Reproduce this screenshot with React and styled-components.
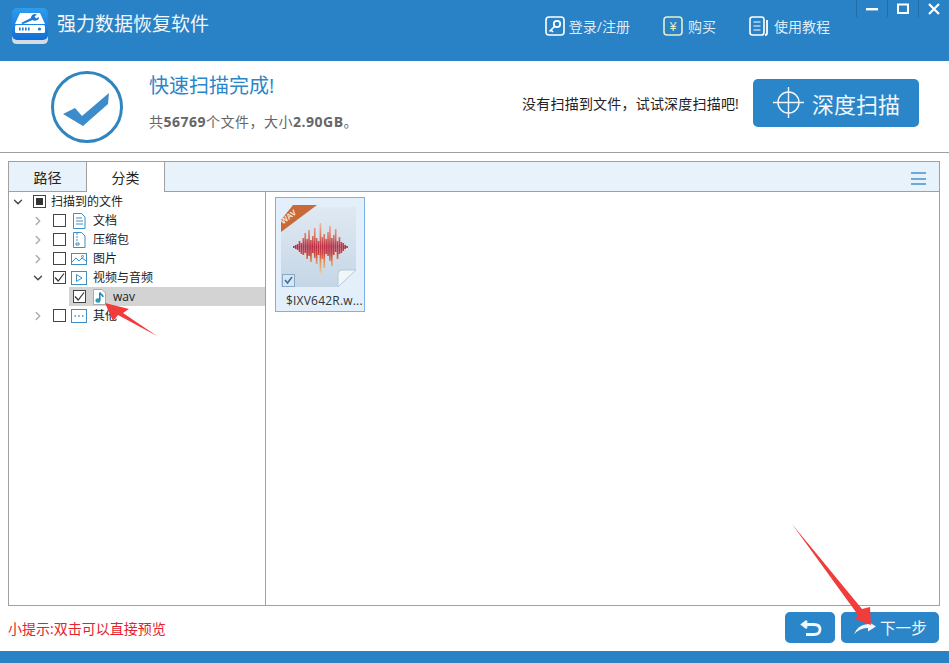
import styled, { createGlobalStyle } from "styled-components";
import { ChevronDown, ChevronRight } from "lucide-react";

const GlobalStyle = createGlobalStyle`
  html, body {
    margin: 0;
    padding: 0;
    background: #fff;
  }
  * {
    box-sizing: border-box;
  }
`;

const FONT = `"Open Sans", "Noto Sans CJK SC", sans-serif`;
const BLUE = "#2981c6";

const Page = styled.div`
  position: relative;
  width: 949px;
  height: 663px;
  overflow: hidden;
  display: flex;
  flex-direction: column;
  background: #fff;
  font-family: ${FONT};
`;

const Header = styled.header`
  flex: none;
  height: 61px;
  display: flex;
  align-items: flex-start;
  background: ${BLUE};
  color: #fff;
`;

const Logo = styled.svg`
  flex: none;
  width: 36px;
  height: 37px;
  margin: 8px 0 0 12px;
`;

const AppTitle = styled.div`
  margin: 10px 0 0 9px;
  font-size: 19px;
  line-height: 28px;
  color: #f2f7fb;
`;

const Nav = styled.nav`
  margin: 16px 0 0 auto;
  display: flex;
  gap: 33px;
`;

const NavItem = styled.div`
  display: flex;
  align-items: center;
  gap: ${(p) => p.$gap ?? 5}px;
  height: 20px;
  font-size: 14px;
  color: #dfecf6;
  white-space: nowrap;
`;

const WindowControls = styled.div`
  flex: none;
  display: flex;
  margin-left: 26px;
  height: 17px;
`;

const WindowButton = styled.div`
  width: 31px;
  height: 17px;
  display: flex;
  align-items: center;
  justify-content: center;
  border-left: 1px solid #1f6ca8;
`;

const Summary = styled.section`
  flex: none;
  height: 92px;
  display: flex;
  align-items: center;
  padding: 0 30px 0 50px;
  border-bottom: 1px solid #a0a0a0;
`;

const SummaryText = styled.div`
  margin: 0 0 10px 25px;
  display: flex;
  flex-direction: column;
`;

const SummaryTitle = styled.div`
  font-size: 20px;
  line-height: 28px;
  color: #2a86c8;
`;

const SummaryCount = styled.div`
  margin-top: 12px;
  font-size: 14px;
  line-height: 20px;
  letter-spacing: 0.5px;
  color: #666;
  b {
    font-weight: 700;
  }
`;

const DeepHint = styled.div`
  margin: 0 0 8px auto;
  font-size: 14px;
  letter-spacing: 0.2px;
  color: #222;
  white-space: nowrap;
`;

const DeepButton = styled.div`
  margin: 0 0 8px 14px;
  width: 166px;
  height: 48px;
  border-radius: 5px;
  background: #2a86c8;
  color: #f0f6fb;
  display: flex;
  align-items: center;
  padding-left: 20px;
  gap: 8px;
  font-size: 22px;
`;

const Panel = styled.main`
  flex: none;
  margin: 8px 0 0 8px;
  width: 932px;
  height: 445px;
  border: 1px solid #a0a0a0;
  display: flex;
  flex-direction: column;
`;

const TabBar = styled.div`
  flex: none;
  height: 30px;
  display: flex;
  background: #e8f2fb;
  border-bottom: 1px solid #a0a0a0;
`;

const Tab = styled.div`
  width: 78px;
  height: ${(p) => (p.$active ? "30px" : "29px")};
  display: flex;
  align-items: center;
  justify-content: center;
  font-size: 14px;
  color: #222;
  border-right: 1px solid #a0a0a0;
  background: ${(p) => (p.$active ? "#fff" : "transparent")};
`;

const MenuIcon = styled.div`
  margin: 10px 13px 0 auto;
  width: 15px;
  height: 13px;
  display: flex;
  flex-direction: column;
  justify-content: space-between;
  span {
    display: block;
    height: 2px;
    background: #6fa9d8;
  }
`;

const Split = styled.div`
  flex: 1;
  display: flex;
  min-height: 0;
`;

const Tree = styled.div`
  flex: none;
  width: 257px;
  border-right: 1px solid #a0a0a0;
`;

const Row = styled.div`
  height: 19px;
  display: flex;
  align-items: center;
  padding-left: ${(p) => p.$indent}px;
  font-size: 12px;
  color: #222;
  white-space: nowrap;
  background: ${(p) => (p.$selected ? "#d3d3d3" : "transparent")};
  margin-left: ${(p) => (p.$selected ? "60px" : "0")};
`;

const Arrow = styled.span`
  width: 14px;
  height: 14px;
  margin-right: 8px;
  display: flex;
  align-items: center;
  justify-content: center;
  color: ${(p) => (p.$open ? "#444" : "#aaa")};
`;

const Box = styled.span`
  flex: none;
  width: 13px;
  height: 13px;
  border: 1px solid #444;
  background: #fff;
  display: flex;
  align-items: center;
  justify-content: center;
`;

const Square = styled.span`
  width: 7px;
  height: 7px;
  background: #333;
`;

const RowIcon = styled.svg`
  flex: none;
  width: 16px;
  height: 16px;
  margin-left: ${(p) => p.$left ?? 5}px;
  margin-right: ${(p) => p.$right ?? 6}px;
`;

const Label = styled.span`
  margin-bottom: 1px;
  margin-left: ${(p) => p.$left ?? 0}px;
`;

const Files = styled.div`
  flex: 1;
  padding: 5px 9px;
`;

const FileTile = styled.div`
  width: 90px;
  height: 115px;
  background: #e3f0fc;
  border: 1px solid #7db2e6;
  display: flex;
  flex-direction: column;
  align-items: flex-start;
`;

const FileThumb = styled.svg`
  flex: none;
  width: 88px;
  height: 90px;
  margin-top: 2px;
`;

const FileName = styled.div`
  margin: 3px 0 0 10px;
  font-size: 12px;
  line-height: 16px;
  letter-spacing: 0.2px;
  color: #333;
  white-space: nowrap;
`;

const BottomBar = styled.div`
  flex: none;
  height: 45px;
  display: flex;
  padding: 6px 10px 0 8px;
`;

const Tip = styled.div`
  margin-top: 7px;
  font-size: 14px;
  line-height: 19px;
  color: #e5222c;
  white-space: nowrap;
`;

const ActionButton = styled.div`
  height: 31px;
  width: ${(p) => p.$width}px;
  margin-left: ${(p) => p.$gap};
  padding-left: ${(p) => p.$pad}px;
  border-radius: 5px;
  background: #2a86c8;
  color: #eef5fb;
  display: flex;
  align-items: center;
  gap: 4px;
  font-size: 15.6px;
`;

const Footer = styled.footer`
  flex: none;
  height: 12px;
  background: ${BLUE};
`;

const Annotations = styled.svg`
  position: absolute;
  left: 0;
  top: 0;
  width: 949px;
  height: 663px;
  pointer-events: none;
`;

const Tick = () => (
  <svg width="11" height="11" viewBox="0 0 11 11">
    <path d="M1 5.5 L4.2 9 L10 1.5" fill="none" stroke="#333" strokeWidth="1.2" />
  </svg>
);

const DocIcon = () => (
  <RowIcon viewBox="0 0 16 16" fill="none" stroke="#3d8fc4" strokeWidth="1">
    <path d="M2.5 .5H10.5L14 4V15.5H2.5Z" />
    <path d="M5 5H11M5 8H12M5 11H12" />
  </RowIcon>
);

const ZipIcon = () => (
  <RowIcon viewBox="0 0 16 16" fill="none" stroke="#3d8fc4" strokeWidth="1">
    <path d="M2.5 .5H10.5L14 4V15.5H2.5Z" />
    <path d="M5 2H7M5 5H7M5 8H7M5 11H8V13H5Z" />
  </RowIcon>
);

const PicIcon = () => (
  <RowIcon viewBox="0 0 16 16" fill="none" stroke="#3d8fc4" strokeWidth="1">
    <rect x=".5" y="2.5" width="15" height="11" />
    <path d="M1 11L5 7L8 10L11 7L15 10" />
    <circle cx="11.5" cy="5.5" r="1" />
  </RowIcon>
);

const VideoIcon = () => (
  <RowIcon viewBox="0 0 16 16" fill="none" stroke="#3d8fc4" strokeWidth="1">
    <rect x=".5" y="1.5" width="15" height="13" />
    <path d="M5.5 4.5L11 8L5.5 11.5Z" />
  </RowIcon>
);

const MoreIcon = () => (
  <RowIcon viewBox="0 0 16 16" fill="none" stroke="#3d8fc4" strokeWidth="1">
    <rect x=".5" y="1.5" width="15" height="13" />
    <path d="M3.5 8H5M7.2 8H8.7M11 8H12.5" strokeWidth="1.6" />
  </RowIcon>
);

const MusicIcon = () => (
  <RowIcon $left={7} $right={4} viewBox="0 0 16 16">
    <path d="M.5 .5H9L12.5 4V15.5H.5Z" fill="#fff" stroke="#aaa" />
    <ellipse cx="5" cy="11.5" rx="2.6" ry="2.2" fill="#1f9fc4" />
    <path d="M6.8 11V3.5C7.3 5.5 10 5.5 10 8" fill="none" stroke="#1f7fb0" strokeWidth="1.5" />
  </RowIcon>
);

const TREE = [
  { label: "文档", icon: DocIcon },
  { label: "压缩包", icon: ZipIcon },
  { label: "图片", icon: PicIcon },
  { label: "视频与音频", icon: VideoIcon, open: true, checked: true },
];

// [up, down] lengths of the wave bars in the thumbnail, left to right
const WAVE = [
  [1, 1], [2, 2], [3, 3], [6, 5], [4, 7], [9, 8], [14, 6], [8, 12], [17, 9], [7, 15],
  [11, 6], [19, 11], [9, 17], [6, 8], [24, 26], [10, 12], [13, 21], [8, 7], [15, 9],
  [21, 14], [9, 19], [12, 8], [18, 5], [6, 12], [10, 7], [5, 6], [4, 4], [2, 2], [1, 1],
];

function WavThumb() {
  return (
    <FileThumb viewBox="0 0 88 90">
      <defs>
        <linearGradient id="page" x1="0" y1="0" x2="0" y2="1">
          <stop offset="0" stopColor="#e0e9f2" />
          <stop offset="1" stopColor="#c5d6e6" />
        </linearGradient>
        <linearGradient id="wave" gradientUnits="userSpaceOnUse" x1="0" y1="22" x2="0" y2="73">
          <stop offset="0" stopColor="#edc2a8" />
          <stop offset="0.3" stopColor="#d8705c" />
          <stop offset="0.48" stopColor="#b92c48" />
          <stop offset="0.62" stopColor="#c9443f" />
          <stop offset="0.8" stopColor="#e29a5c" />
          <stop offset="1" stopColor="#f0c48c" />
        </linearGradient>
      </defs>
      <path d="M17 7H80V70L62 87H5V20Z" fill="url(#page)" />
      <path d="M62 87V74Q62 70 66 70H80Z" fill="#f2f6fa" stroke="#b9c9d8" />
      {WAVE.map(([up, down], i) => (
        <rect key={i} x={17 + i * 1.9} y={47 - up} width="1.7" height={up + down} fill="url(#wave)" />
      ))}
      <path d="M17 5H41L5 32V20Z" fill="#c8693a" />
      <text
        x="14"
        y="19"
        fill="#f6e6d8"
        fontSize="8"
        fontWeight="700"
        fontFamily="Liberation Sans, sans-serif"
        transform="rotate(-38 14 19)"
        textAnchor="middle"
      >
        WAV
      </text>
      <rect x="6.5" y="74.5" width="12" height="12" fill="#d6e6f5" stroke="#8aa6c0" />
      <path d="M9 80L11.5 83L16 77" fill="none" stroke="#3a6f9e" strokeWidth="1.6" />
    </FileThumb>
  );
}

export default function App() {
  return (
    <Page>
      <GlobalStyle />
      <Header>
        <Logo viewBox="0 0 36 37">
          <defs>
            <linearGradient id="logoBlue" x1="0" y1="0" x2="0" y2="1">
              <stop offset="0" stopColor="#2f9cec" />
              <stop offset="1" stopColor="#0f6ed8" />
            </linearGradient>
          </defs>
          <path d="M0 28H36V31Q36 36 31 36H5Q0 36 0 31Z" fill="#d5dde2" />
          <rect x="0" y="0" width="36" height="32" rx="5" fill="url(#logoBlue)" />
          <path d="M8 5H28L33 16H3Z" fill="#fff" />
          <rect x="3" y="17" width="30" height="8" rx="1.5" fill="#fff" />
          <path d="M7 19.5H8.6V22.5H7ZM10 19.5H11.6V22.5H10ZM13 19.5H14.6V22.5H13ZM16 19.5H17.6V22.5H16Z" fill="#1a78d8" />
          <circle cx="27.5" cy="21" r="1.6" fill="#1a78d8" />
          <path d="M9 15L19 10Q19 7 22 6L25 6.5L22.5 8.5L24 10.5L27 9Q27 12 24 12.5Q22 13 20.5 12L11 16Z" fill="#1a78d8" />
        </Logo>
        <AppTitle>强力数据恢复软件</AppTitle>
        <Nav>
          <NavItem $gap={4}>
            <svg width="20" height="20" viewBox="0 0 20 20">
              <rect x="1" y="1" width="18" height="18" rx="3" fill="none" stroke="#fff" strokeWidth="1.6" />
              <circle cx="12" cy="8" r="3.2" fill="none" stroke="#fff" strokeWidth="1.8" />
              <path d="M10 10L4.5 15.5M6 14L8 16" fill="none" stroke="#fff" strokeWidth="1.6" />
            </svg>
            登录/注册
          </NavItem>
          <NavItem>
            <svg width="20" height="20" viewBox="0 0 20 20">
              <rect x="1" y="1" width="18" height="18" rx="3" fill="none" stroke="#e6efc8" strokeWidth="1.6" />
              <text x="10" y="14.5" fontSize="12" textAnchor="middle" fill="#e6efc8" fontFamily="Liberation Sans, sans-serif">
                ¥
              </text>
            </svg>
            购买
          </NavItem>
          <NavItem>
            <svg width="20" height="20" viewBox="0 0 20 20" fill="none" stroke="#fff">
              <rect x="1" y="1" width="14" height="18" rx="2.5" strokeWidth="1.6" />
              <path d="M4.5 6H11.5M4.5 10H11.5M4.5 14H11.5" strokeWidth="1.2" />
              <path d="M18 4V17Q18 19 16 19" strokeWidth="1.8" />
            </svg>
            使用教程
          </NavItem>
        </Nav>
        <WindowControls>
          <WindowButton>
            <svg width="12" height="12" viewBox="0 0 12 12">
              <rect x="0" y="5" width="12" height="2.4" fill="#fff" />
            </svg>
          </WindowButton>
          <WindowButton>
            <svg width="12" height="12" viewBox="0 0 12 12">
              <rect x="1" y="1.5" width="10" height="8.5" fill="none" stroke="#fff" strokeWidth="2" />
            </svg>
          </WindowButton>
          <WindowButton>
            <svg width="12" height="12" viewBox="0 0 12 12">
              <path d="M1 1L11 11M11 1L1 11" stroke="#fff" strokeWidth="2.2" />
            </svg>
          </WindowButton>
        </WindowControls>
      </Header>

      <Summary>
        <svg width="74" height="74" viewBox="0 0 74 74">
          <circle cx="37" cy="37" r="34.5" fill="none" stroke="#3085bf" strokeWidth="3" />
          <path d="M13 44L25 38L32 46L59 23L58 34L33 56Z" fill="#3c8ccb" />
        </svg>
        <SummaryText>
          <SummaryTitle>快速扫描完成!</SummaryTitle>
          <SummaryCount>
            共<b>56769</b>个文件，大小<b>2.90GB</b>。
          </SummaryCount>
        </SummaryText>
        <DeepHint>没有扫描到文件，试试深度扫描吧!</DeepHint>
        <DeepButton>
          <svg width="31" height="31" viewBox="0 0 31 31" fill="none" stroke="#f0f6fb" strokeWidth="1.4">
            <circle cx="15.5" cy="15.5" r="10.5" />
            <path d="M0 15.5H31M15.5 0V31" />
          </svg>
          深度扫描
        </DeepButton>
      </Summary>

      <Panel>
        <TabBar>
          <Tab>路径</Tab>
          <Tab $active>分类</Tab>
          <MenuIcon>
            <span />
            <span />
            <span />
          </MenuIcon>
        </TabBar>
        <Split>
          <Tree>
            <Row $indent={2}>
              <Arrow $open>
                <ChevronDown size={14} strokeWidth={2.4} />
              </Arrow>
              <Box>
                <Square />
              </Box>
              <Label $left={5}>扫描到的文件</Label>
            </Row>
            {TREE.map((item) => (
              <Row $indent={22} key={item.label}>
                <Arrow $open={item.open}>
                  {item.open ? <ChevronDown size={14} strokeWidth={2.4} /> : <ChevronRight size={14} strokeWidth={2.4} />}
                </Arrow>
                <Box>{item.checked && <Tick />}</Box>
                <item.icon />
                <Label>{item.label}</Label>
              </Row>
            ))}
            <Row $indent={4} $selected>
              <Box>
                <Tick />
              </Box>
              <MusicIcon />
              <Label>wav</Label>
            </Row>
            <Row $indent={22}>
              <Arrow>
                <ChevronRight size={14} strokeWidth={2.4} />
              </Arrow>
              <Box />
              <MoreIcon />
              <Label>其他</Label>
            </Row>
          </Tree>
          <Files>
            <FileTile>
              <WavThumb />
              <FileName>$IXV642R.w...</FileName>
            </FileTile>
          </Files>
        </Split>
      </Panel>

      <BottomBar>
        <Tip>小提示:双击可以直接预览</Tip>
        <ActionButton $width={50} $pad={15} $gap="auto">
          <svg width="22" height="20" viewBox="0 0 22 20" fill="none" stroke="#f2f7fb" strokeWidth="2.8">
            <path d="M7 3L2.5 6.5L7 10" />
            <path d="M3 6.5H14Q20 6.5 20 11.5Q20 16.5 14 16.5H6" />
          </svg>
        </ActionButton>
        <ActionButton $width={98} $pad={13} $gap="6px">
          <svg width="22" height="14" viewBox="0 0 22 14">
            <path d="M0 13.5Q3 4 14 3V.5L22 5.5L14 10.5V7Q6 6.5 0 13.5Z" fill="#f2f7fb" />
          </svg>
          下一步
        </ActionButton>
      </BottomBar>
      <Footer />

      <Annotations viewBox="0 0 949 663">
        <polygon points="105,303 129,309 123,313 157,336 118,315 113,321" fill="#f23b3b" />
        <polygon points="792,524 862,609 870,607 871,625 855,619 858,615" fill="#f23b3b" />
      </Annotations>
    </Page>
  );
}
